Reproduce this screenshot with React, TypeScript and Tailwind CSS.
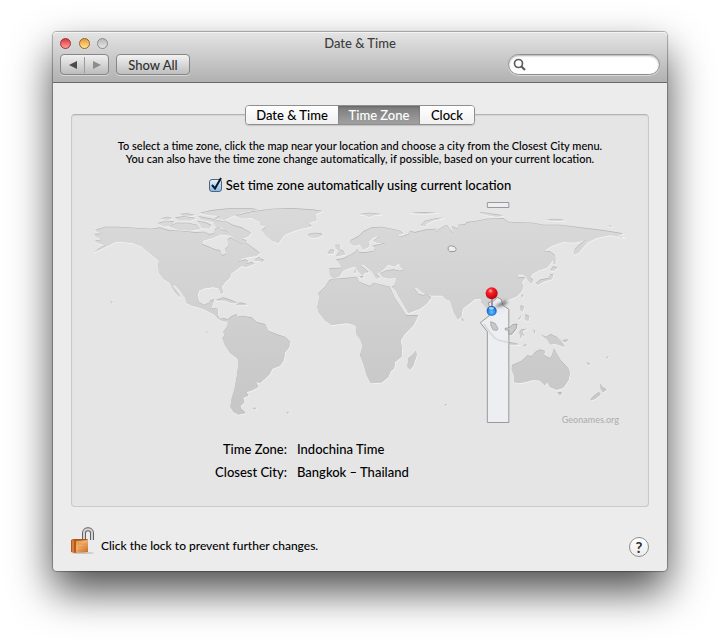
import { useState } from "react"
import { clsx } from "clsx"

const tabs = [
  { name: "Date & Time", width: "w-[92px]" },
  { name: "Time Zone", width: "w-[82px]" },
  { name: "Clock", width: "w-[54px]" },
]

// Map paths are drawn at three units per pixel
const americas = [
  "M30 120L60 110 100 110 150 113 200 116 225 112 250 120 290 122 330 126 360 125 372 132 388 130 390 118 400 108 410 122 405 134 385 142 355 150 352 162 368 168 390 178 405 180 412 196 424 190 420 176 430 168 428 148 436 142 455 152 470 160 485 158 500 170 525 188 515 196 490 200 470 205 460 214 480 208 490 212 484 220 500 216 508 220 484 230 470 226 455 238 438 250 435 262 420 276 410 290 414 308 408 310 402 294 385 290 360 293 342 300 337 318 342 335 356 344 372 338 376 330 388 328 382 345 380 354 398 356 398 374 405 386 418 384 428 388 424 394 412 392 398 384 388 372 360 358 345 352 320 345 305 338 300 322 285 300 268 284 262 288 275 304 288 322 272 308 260 290 255 278 235 265 222 248 220 225 222 212 208 200 190 185 170 168 145 158 110 154 90 155 70 165 50 175 25 186 60 164 38 158 30 152 52 148 34 140 28 132 50 130Z",
  "M385 95L420 92 445 105 470 112 498 128 490 138 470 145 485 152 478 162 465 156 450 146 440 138 430 125 410 112 392 108Z",
  "M218 100L240 92 268 94 262 104 240 108Z",
  "M252 108L275 98 310 98 335 104 345 116 318 120 280 118Z",
  "M225 86L245 80 262 84 250 88Z",
  "M270 82L300 78 332 84 318 90 280 90Z",
  "M282 72L306 70 330 74 305 78Z",
  "M335 92L362 96 380 106 372 114 350 112 345 102Z",
  "M340 78L372 84 410 92 380 94 350 88Z",
  "M400 116L420 120 438 130 446 138 425 134 410 134Z",
  "M345 68L380 60 430 55 500 55 520 58 470 66 440 78 420 88 388 84 405 76 370 74Z",
  "M450 76L500 64 560 56 620 54 680 58 712 62 690 72 695 90 670 98 680 108 650 114 620 124 600 132 590 144 580 158 560 150 545 138 530 120 544 108 525 104 528 96 500 82 470 84Z",
  "M668 132L690 128 710 130 712 136 690 142 675 140Z",
  "M508 210L522 200 527 206 536 208 534 216 524 212Z",
  "M392 330L415 322 440 330 458 338 440 338 420 330Z",
  "M452 344L465 337 488 343 470 344Z",
  "M428 388L440 378 455 372 456 380 470 377 500 382 515 396 540 402 550 422 575 432 600 440 616 455 612 472 600 486 596 510 585 526 562 535 555 550 540 565 525 578 512 574 520 590 500 600 484 605 490 616 474 622 478 636 465 648 470 658 482 668 460 672 445 664 436 650 440 625 448 600 455 560 460 525 458 505 435 488 420 465 412 445 418 436 415 425 428 408Z",
  "M500 654L514 653 510 657Z",
  "M76 333L84 337 79 339Z",
  "M604 665L613 667 607 669Z",
  "M364 424L368 427 365 430Z",
]

const eurasia = [
  "M88 234L125 233 120 222 108 208 130 205 150 194 165 186 172 176 178 186 200 186 222 182 225 172 215 168 258 157 232 158 220 152 240 136 222 140 205 155 208 168 190 178 180 162 162 166 150 158 152 150 175 138 190 124 215 112 245 110 275 116 300 122 310 130 290 134 280 128 300 140 325 132 330 122 345 126 380 118 410 116 405 126 418 116 440 104 452 120 460 128 456 108 475 116 475 104 495 102 500 96 530 92 560 86 610 84 625 95 700 98 730 104 780 104 860 114 910 120 970 130 950 136 975 142 930 134 890 142 862 156 850 170 835 188 822 192 824 178 842 160 857 148 835 154 815 156 790 154 755 166 732 182 750 184 765 195 755 215 740 232 715 240 695 252 692 262 700 270 694 280 684 270 678 258 668 252 652 252 656 262 676 262 665 276 670 292 663 305 650 318 625 328 610 335 600 325 592 332 610 350 616 365 600 374 588 362 578 354 570 380 580 394 568 384 563 360 555 348 545 338 542 325 525 326 510 338 488 355 484 378 474 388 462 368 450 330 440 328 425 315 392 315 370 308 350 292 343 293 356 312 372 315 376 310 394 322 380 340 360 355 325 368 318 355 300 325 285 298 275 290 285 285 290 262 265 264 248 260 240 250 255 242 280 238 300 242 312 238 300 228 298 218 284 228 265 222 252 236 240 246 228 250 240 262 228 264 216 244 190 222 182 226 206 246 196 246 188 256 176 244 165 228 150 232 130 240 118 258 100 264 90 256Z",
  "M100 266L135 264 170 260 178 275 210 288 220 278 270 290 285 325 305 355 318 375 355 375 340 405 315 430 302 450 306 480 304 500 285 515 282 535 272 542 265 560 245 576 212 578 200 555 190 520 180 495 188 470 182 450 168 430 170 410 160 402 140 398 95 404 75 390 55 365 52 350 58 325 55 310 75 290 88 270Z",
  "M108 198L135 192 130 182 120 178 118 164 106 164 108 174 118 184Z",
  "M82 190L102 190 102 180 92 178Z",
  "M362 105L375 92 400 86 433 82 400 90 380 100 376 108Z",
  "M178 72L210 68 245 72 222 74 208 80 195 74Z",
  "M330 68L370 66 415 67 370 70Z",
  "M348 482L350 495 340 525 330 538 322 530 325 505 338 494Z",
  "M484 382L491 390 487 396Z",
  "M162 248L166 238 169 246Z",
  "M176 258L190 258 188 264Z",
  "M432 643L440 643 437 646Z",
  "M535 66L560 68 585 72 610 76 590 79 560 74Z",
  "M738 88L765 86 796 90 765 92Z",
]

const oceania = [
  "M216 525L245 512 262 496 275 498 285 486 300 478 315 482 312 495 330 504 336 495 342 475 350 490 362 510 385 535 390 550 385 570 370 592 350 598 330 590 322 575 315 585 300 570 280 568 255 575 235 578 222 575 222 555 215 538Z",
  "M352 606L366 606 360 616Z",
  "M480 580L488 592 500 598 488 606 482 596Z",
  "M476 606L482 612 465 626 450 630 458 620Z",
  "M300 432L318 440 332 432 350 440 362 452 375 470 345 460 330 462 322 448Z",
  "M194 414L210 412 232 402 228 418 215 434 198 424Z",
  "M182 453L210 456 240 463 210 462Z",
  "M238 426L244 418 262 416 246 422 254 440 246 432 242 446Z",
  "M280 418L286 424 283 432Z",
  "M242 345L252 350 248 364 240 358Z",
  "M256 372L268 378 266 392 256 388Z",
  "M234 388L244 376 240 386Z",
  "M245 312L250 316 245 324Z",
  "M288 278L302 268 326 264 332 252 340 252 336 266 310 274 294 284Z",
  "M330 240L340 228 352 232 342 240Z",
  "M338 192L346 200 346 222 340 220Z",
  "M366 450L386 448 376 456Z",
  "M438 514L450 522 446 524Z",
  "M498 502L506 498 502 504Z",
  "M504 107L518 107 511 110Z",
  "M248 466L262 462 255 468Z",
]

function Land() {
  return (
    <>
      {americas.map((d) => <path key={d} d={d} />)}
      <g transform="translate(645 0)">{eurasia.map((d) => <path key={d} d={d} />)}</g>
      <g transform="translate(1065 0)">{oceania.map((d) => <path key={d} d={d} />)}</g>
    </>
  )
}

function WorldMap() {
  return (
    <svg viewBox="0 30 1650 690" className="block h-auto w-full" role="img" aria-label="World map">
      <defs>
        <linearGradient id="land" gradientUnits="userSpaceOnUse" x1="0" y1="40" x2="0" y2="680">
          <stop offset="0" stopColor="#dadada" />
          <stop offset="1" stopColor="#c6c6c6" />
        </linearGradient>
        <radialGradient id="redPin" cx="0.4" cy="0.3" r="0.7">
          <stop offset="0" stopColor="#ffb0a8" />
          <stop offset="0.3" stopColor="#f8222a" />
          <stop offset="1" stopColor="#b90008" />
        </radialGradient>
        <radialGradient id="bluePin" cx="0.5" cy="0.6" r="0.6">
          <stop offset="0" stopColor="#6cc4fb" />
          <stop offset="0.6" stopColor="#2384e4" />
          <stop offset="1" stopColor="#14479e" />
        </radialGradient>
        <filter id="pinShadow" x="-50%" y="-50%" width="200%" height="200%">
          <feGaussianBlur stdDeviation="5" />
        </filter>
      </defs>

      <g transform="translate(1 3)" fill="#f3f3f3" stroke="#f3f3f3" strokeWidth="3"><Land /></g>
      <g fill="#b4b4b4"><Land /></g>
      <g transform="translate(0 2)" fill="url(#land)"><Land /></g>

      <g transform="translate(1065 0)">
        <path d="M24 172L32 167 44 170 49 178 45 184 30 185 25 180Z" fill="#eeeeee" stroke="#999" strokeWidth="3" />
        <g fill="#eef0f3" fillOpacity="0.85" stroke="#999" strokeWidth="3">
          <path d="M142 37.500H206.500V52.500H142Z" />
          <path d="M142 697.500V425L121 398 148 377 156 364 148 350 145 338 160 334 172 322 184 328 188 345 206.500 358V697.500Z" />
        </g>
        <g fill="#c9c9c9" stroke="#949494" strokeWidth="2">
          <path d="M152 395L165 400 174 416 171 421 160 420 153 408Z" />
          <path d="M195 415L208 413 218 404 231 402 228 416 215 432 207 433 207 420 196 420Z" />
        </g>
        <path d="M132 402L150 428 166 446 180 452 206 457" fill="none" stroke="#d9dadc" strokeWidth="5" />
        <path d="M162 352L180 340 196 332 204 336 194 345 178 350Z" fill="#555" fillOpacity="0.8" filter="url(#pinShadow)" />
        <path d="M156 326V350" stroke="#999aa5" strokeWidth="6" />
        <circle cx="155" cy="310" r="18" fill="url(#redPin)" />
        <circle cx="155" cy="363" r="15" fill="url(#bluePin)" />
        <ellipse cx="154" cy="355" rx="8" ry="4" fill="#c9e3fa" fillOpacity="0.8" />
      </g>
    </svg>
  )
}

function LockIcon() {
  return (
    <svg width="26" height="28" viewBox="1 0 26 28" aria-hidden="true">
      <defs>
        <linearGradient id="brass" x1="0" y1="0" x2="1" y2="1">
          <stop offset="0" stopColor="#d9822f" />
          <stop offset="0.5" stopColor="#f2b26c" />
          <stop offset="1" stopColor="#c7661c" />
        </linearGradient>
      </defs>
      <ellipse cx="13" cy="26" rx="11" ry="1" fill="#c8c8c8" />
      <path d="M14 13V6C14 1 22 1 22 6V13" fill="none" stroke="#606060" strokeWidth="4" />
      <path d="M14 13V6C14 1 22 1 22 6V13" fill="none" stroke="#d5d5d5" strokeWidth="2" />
      <path d="M1 13L4 12H17L18 13V25L6 26 1 25Z" fill="url(#brass)" />
      <path d="M1 13L6 14V26L1 25Z" fill="#b8591b" />
      <path d="M3 13V25" stroke="#edaa6d" />
      <path d="M1 13L4 12H17L18 13 6 14Z" fill="#a8581f" />
      <path d="M8 17H16M8 20H16M8 23H16" stroke="#d98a45" strokeOpacity="0.7" />
    </svg>
  )
}

export default function App() {
  const [active, setActive] = useState("Time Zone")
  const [automatic, setAutomatic] = useState(true)

  return (
    <div className="bg-white px-[53px] pt-8 pb-[73px] font-[Lato,'Noto_Sans',sans-serif] text-[13px] leading-4 font-medium text-black">
      <main className="rounded-[4px] bg-[#ececec] shadow-[0_0_1px_1px_rgba(0,0,0,0.3),0_20px_42px_rgba(0,0,0,0.7)]">
        <header className="rounded-t-[4px] border-b border-[#686868] bg-linear-to-b from-[#e4e4e4] to-[#b1b1b1] px-[7px] pb-[7px] shadow-[inset_0_1px_0_#f4f4f4]">
          <div className="grid grid-cols-[1fr_auto_1fr] items-center pt-[3px]">
            <div className="flex gap-[7px]">
              <button aria-label="Close" className="size-[11px] rounded-full border border-[#923338] bg-linear-to-b from-[#d9333e] to-[#ff9b98]" />
              <button aria-label="Minimize" className="ml-px size-[11px] rounded-full border border-[#95622b] bg-linear-to-b from-[#e69a33] to-[#ffe58c]" />
              <button aria-label="Zoom" className="size-[11px] rounded-full border border-[#8b8b8b] bg-linear-to-b from-[#b9b9b9] to-[#e6e6e6]" />
            </div>
            <h1 className="text-[#3d3d3d]">Date &amp; Time</h1>
          </div>
          <div className="flex items-center pt-[3px]">
            <div className="flex h-[21px] w-[49px] items-center rounded-[4px] border border-[#868686] bg-linear-to-b from-[#f0f0f0] to-[#bcbcbc] shadow-[0_1px_0_#d8d8d8]">
              <button aria-label="Back" className="flex flex-1 justify-center">
                <svg width="8" height="8" viewBox="0 0 8 8"><path d="M8 0V8L0 4Z" fill="#4b4b4b" /></svg>
              </button>
              <span className="h-4 w-px bg-[#9c9c9c]" />
              <button aria-label="Forward" className="flex flex-1 justify-center">
                <svg width="8" height="8" viewBox="0 0 8 8"><path d="M0 0V8L8 4Z" fill="#8c8c8c" /></svg>
              </button>
            </div>
            <button className="ml-[7px] h-[21px] w-[74px] rounded-[4px] border border-[#868686] bg-linear-to-b from-[#f3f3f3] to-[#bebebe] text-[#303030] shadow-[0_1px_0_#d8d8d8]">Show All</button>
            <label className="ml-auto flex h-[21px] w-[152px] items-center rounded-full border border-[#8e8e8e] bg-white pr-2 pl-1 shadow-[inset_0_1px_2px_#b0b0b0,0_1px_0_#d8d8d8]">
              <svg width="13" height="13" viewBox="0 0 13 13" fill="none" stroke="#5d5d5d" strokeWidth="1.7">
                <circle cx="5.500" cy="5.500" r="4" />
                <path d="M8.500 8.500L12 12" strokeWidth="2.2" />
              </svg>
              <input type="text" aria-label="Search" className="ml-1 min-w-0 flex-1 bg-transparent outline-none" />
            </label>
          </div>
        </header>

        <div className="px-[18px] pt-[22px] pb-[14px]">
          <nav className="relative z-10 mx-auto flex h-5 w-fit overflow-hidden rounded-[4px] border border-[#8f8f8f] bg-white shadow-[0_1px_1px_#c4c4c4]">
            {tabs.map((tab) => (
              <button
                key={tab.name}
                onClick={() => setActive(tab.name)}
                className={clsx(
                  "h-full",
                  tab.width,
                  active === tab.name
                    ? "bg-linear-to-b from-[#7a7a7a] to-[#a2a2a2] text-white shadow-[inset_0_1px_2px_#666]"
                    : "bg-linear-to-b from-white to-[#f0f0f0]"
                )}
              >
                {tab.name}
              </button>
            ))}
          </nav>

          <section className="-mt-[11px] rounded-[4px] border border-[#c9c9c9] border-t-[#b3b3b3] bg-[#e5e5e5] px-[13px] pt-6 pb-[26px] shadow-[inset_0_1px_1px_#d4d4d4]">
            <p className="text-center text-[11px] leading-[13px]">
              To select a time zone, click the map near your location and choose a city from the Closest City menu.
              <br />
              You can also have the time zone change automatically, if possible, based on your current location.
            </p>
            <label className="mx-auto mt-3 flex w-fit items-center gap-1">
              <span className="grid">
                <input
                  type="checkbox"
                  checked={automatic}
                  onChange={(e) => setAutomatic(e.target.checked)}
                  className="peer col-start-1 row-start-1 size-[13px] appearance-none rounded-[3px] border border-[#52627d] bg-linear-to-b from-[#e4f1fc] to-[#86bdec]"
                />
                <svg viewBox="0 0 13 13" className="pointer-events-none invisible col-start-1 row-start-1 size-[13px] overflow-visible peer-checked:visible">
                  <path d="M3 6L6 9.500 12 -1" fill="none" stroke="#101828" strokeWidth="2" />
                </svg>
              </span>
              Set time zone automatically using current location
            </label>
            <div className="relative mt-[7px]">
              <WorldMap />
              <a href="#" className="absolute right-4 bottom-1 text-[9px] leading-3 text-[#b0b0b0]">Geonames.org</a>
            </div>
            <dl className="mt-[11px] grid grid-cols-[202px_1fr] gap-x-[10px] gap-y-[7px]">
              <dt className="text-right">Time Zone:</dt>
              <dd>Indochina Time</dd>
              <dt className="text-right">Closest City:</dt>
              <dd>Bangkok – Thailand</dd>
            </dl>
          </section>

          <footer className="mt-5 flex items-start">
            <button aria-label="Lock"><LockIcon /></button>
            <p className="mt-[11px] ml-1 text-[12px] leading-4">Click the lock to prevent further changes.</p>
            <button aria-label="Help" className="mt-[10px] ml-auto size-5 rounded-full border border-[#8e8e8e] bg-linear-to-b from-white to-[#ececec] text-[15px] leading-4 font-bold text-[#303030]">?</button>
          </footer>
        </div>
      </main>
    </div>
  )
}
